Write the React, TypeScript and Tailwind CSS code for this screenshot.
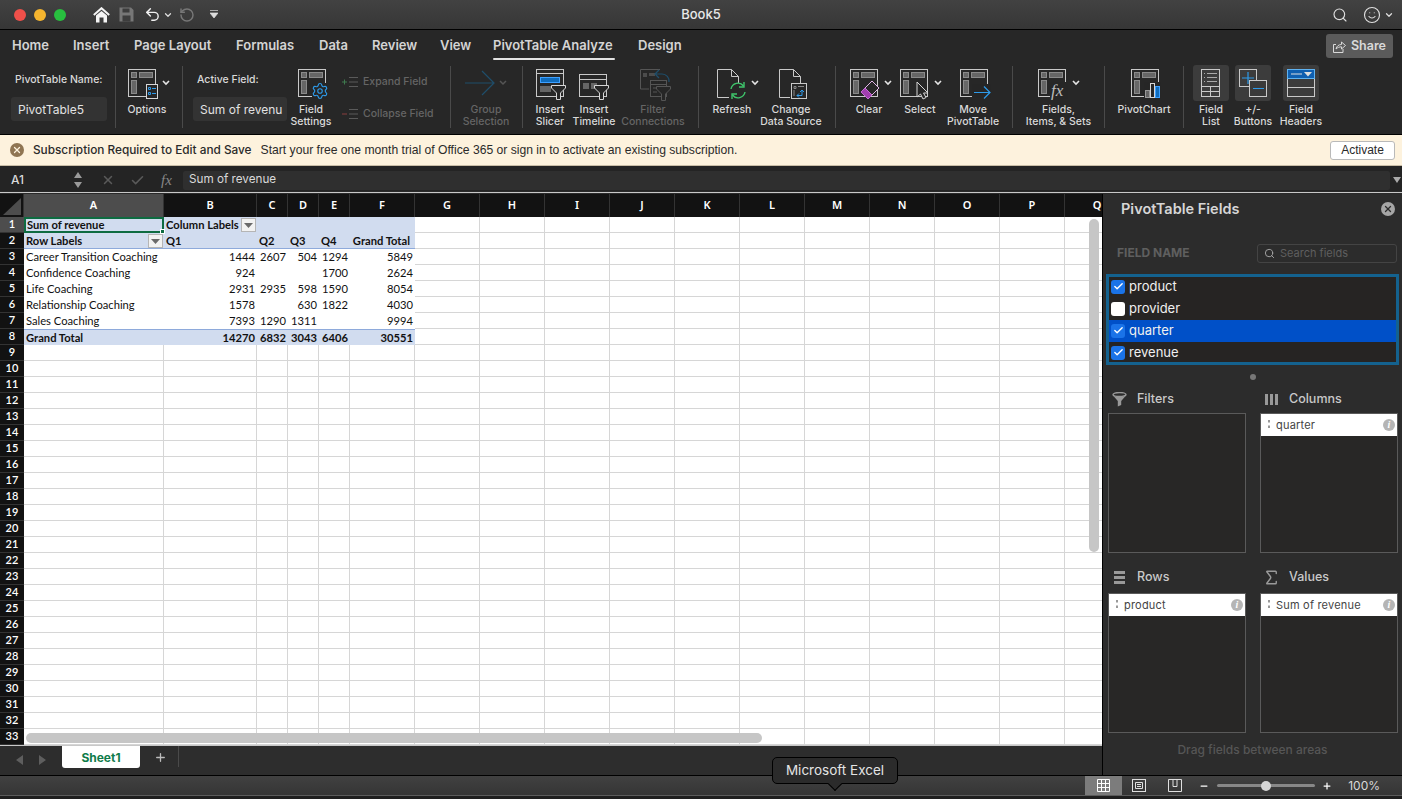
import type { ReactElement, ReactNode } from 'react'
import { ChevronDown, Search, Settings, Smile, Undo2, RotateCcw, Sigma, X, Check, Plus, Minus } from 'lucide-react'

const UI_FONT = "font-['Inter','Liberation_Sans',sans-serif]"
const SHEET_FONT = "font-['Lato','Liberation_Sans',sans-serif]"

const COLUMNS = [
  ['A', 140], ['B', 93], ['C', 31], ['D', 31], ['E', 31], ['F', 65], ['G', 65], ['H', 65], ['I', 65],
  ['J', 65], ['K', 65], ['L', 65], ['M', 65], ['N', 65], ['O', 65], ['P', 65], ['Q', 65]
] as const

const PIVOT_ROWS: (string | null)[][] = [
  ['Career Transition Coaching', '1444', '2607', '504', '1294', '5849'],
  ['Confidence Coaching', '924', null, null, '1700', '2624'],
  ['Life Coaching', '2931', '2935', '598', '1590', '8054'],
  ['Relationship Coaching', '1578', null, '630', '1822', '4030'],
  ['Sales Coaching', '7393', '1290', '1311', null, '9994']
]

const GRAND_TOTAL = ['Grand Total', '14270', '6832', '3043', '6406', '30551']

function PivotBase(): ReactElement {
  return (
    <>
      <rect x="0.5" y="0.5" width="27" height="27" stroke="#c9c9c9" fill="none" />
      <rect x="3.5" y="3.5" width="5" height="5" fill="#666" stroke="#8a8a8a" />
      <rect x="11.5" y="3.5" width="13" height="5" fill="#666" stroke="#8a8a8a" />
      <rect x="3.5" y="11.5" width="5" height="13" fill="#666" stroke="#8a8a8a" />
    </>
  )
}

function Funnel({ x, y, color = '#d6d6d6' }: { x: number; y: number; color?: string }): ReactElement {
  return (
    <path
      transform={`translate(${x} ${y})`}
      d="M0.5 0.5H14.5V3L9.5 8V14.5H5.5V8L0.5 3Z"
      fill="#262626"
      stroke={color}
    />
  )
}

function Caret({ x, y = 12 }: { x: number; y?: number }): ReactElement {
  return <path d={`M${x} ${y}l3 3l3 -3`} fill="none" stroke="#e4e4e4" strokeWidth="1.6" />
}

function Icon({ children, className = '' }: { children: ReactNode; className?: string }): ReactElement {
  return (
    <svg width="30" height="30" viewBox="0 0 30 30" className={`shrink-0 overflow-visible ${className}`}>
      {children}
    </svg>
  )
}

function OptionsIcon(): ReactElement {
  return (
    <Icon className="mr-[9px]">
      <PivotBase />
      <rect x="18.5" y="15.5" width="11" height="14" fill="#262626" stroke="#d6d6d6" />
      <path d="M20.5 18.5h2v2h-2zM20.5 23.5h2v2h-2z" fill="none" stroke="#2e9bea" />
      <path d="M24 19.5h4M24 24.5h4" stroke="#2e9bea" />
      <Caret x={35} />
    </Icon>
  )
}

function FieldSettingsIcon(): ReactElement {
  return (
    <Icon className="ml-[4px]">
      <PivotBase />
      <rect x="14" y="14" width="16" height="16" fill="#262626" />
      <Settings x={13} y={13} width={18} height={18} color="#2e9bea" strokeWidth={1.5} />
    </Icon>
  )
}

function GroupIcon(): ReactElement {
  return (
    <Icon className="mr-[12px]">
      <path d="M0 14H28M17 2L29 14L17 26" fill="none" stroke="#1f4e6b" strokeWidth="1.2" />
      <path d="M35 12l3 3l3 -3" fill="none" stroke="#555" strokeWidth="1.5" />
    </Icon>
  )
}

function SlicerIcon(): ReactElement {
  return (
    <Icon className="ml-[2px]">
      <rect x="0.5" y="0.5" width="27" height="27" stroke="#c9c9c9" fill="none" />
      <path d="M1 4.5H27" stroke="#c9c9c9" />
      <rect x="4.5" y="8.5" width="19" height="5" fill="#0f6cbd" stroke="#3ea0ff" />
      <rect x="4" y="17" width="11" height="6" fill="#666" />
      <Funnel x={15} y={16} />
    </Icon>
  )
}

function TimelineIcon(): ReactElement {
  return (
    <Icon>
      <rect x="0.5" y="5.5" width="27" height="22" stroke="#c9c9c9" fill="none" />
      <path d="M1 10.5H27" stroke="#c9c9c9" />
      <rect x="4" y="14" width="6" height="6" fill="#666" />
      <rect x="12" y="14" width="6" height="6" fill="#666" />
      <Funnel x={15} y={16} />
    </Icon>
  )
}

function ConnectionsIcon(): ReactElement {
  return (
    <Icon className="ml-[4px]">
      <path d="M20 0.5H0.5V20H9" fill="none" stroke="#555" />
      <rect x="3" y="4" width="4" height="4" fill="#4c4c4c" />
      <rect x="9" y="4" width="6" height="3" fill="#4c4c4c" />
      <path d="M29 13a7 7 0 0 0 -7 -8h-6M19 1l-4 4l4 4" fill="none" stroke="#1f4e6b" strokeWidth="1.2" />
      <rect x="10.5" y="11.5" width="16" height="16" fill="#262626" stroke="#555" />
      <path d="M11 15.5H26M13 19h6M13 23h4" stroke="#555" />
      <Funnel x={16} y={17} color="#555" />
    </Icon>
  )
}

function RefreshIcon(): ReactElement {
  return (
    <Icon>
      <path d="M0.5 0.5H14.5L21.5 7.5V14M12 28.5H0.5V0.5M14.5 0.5V7.5H21.5" fill="none" stroke="#c9c9c9" />
      <path d="M14 20a7 7 0 0 1 12.5 -3M28 23a7 7 0 0 1 -12.5 3" fill="none" stroke="#3fc66c" strokeWidth="1.4" />
      <path d="M27 13v5h-5M15 30v-5h5" fill="none" stroke="#3fc66c" strokeWidth="1.4" />
      <Caret x={35} />
    </Icon>
  )
}

function DataSourceIcon(): ReactElement {
  return (
    <Icon className="ml-[5px]">
      <path d="M0.5 0.5H14.5L21.5 7.5V14M11 28.5H0.5V0.5M14.5 0.5V7.5H21.5" fill="none" stroke="#c9c9c9" />
      <rect x="12.5" y="14.5" width="15" height="15" fill="#262626" stroke="#c9c9c9" />
      <path d="M15 17.5h2v2h-2zM19 17.5h6M15 21v6" stroke="#888" fill="none" />
      <path d="M18 26.5h5v-5M21 23l2 -2l2 2M20 24.5l-2 2l2 2" fill="none" stroke="#2e9bea" />
    </Icon>
  )
}

function ClearIcon(): ReactElement {
  return (
    <Icon className="mr-[8px]">
      <PivotBase />
      <path d="M11 23L22 12L29 19L18 30Z" fill="#262626" stroke="#e0b4e6" />
      <path d="M11 23L15 19L22 26L18 30Z" fill="#a23fb0" stroke="#c46fd2" />
      <Caret x={35} />
    </Icon>
  )
}

function SelectIcon(): ReactElement {
  return (
    <Icon className="mr-[10px]">
      <PivotBase />
      <path d="M17 13V28L20.5 25L23 30L26 28.5L23.5 24H28Z" fill="#262626" stroke="#d6d6d6" />
      <Caret x={35} />
    </Icon>
  )
}

function MoveIcon(): ReactElement {
  return (
    <Icon className="ml-[4px]">
      <PivotBase />
      <rect x="12" y="15" width="19" height="14" fill="#262626" />
      <path d="M14 23.5H30M24 17.5L30 23.5L24 29.5" fill="none" stroke="#2e9bea" strokeWidth="1.2" />
    </Icon>
  )
}

function FieldsIcon(): ReactElement {
  return (
    <Icon className="mr-[12px]">
      <PivotBase />
      <rect x="12" y="13" width="18" height="17" fill="#262626" />
      <text x="13" y="27" fontSize="17" fontStyle="italic" fontFamily="'Liberation Serif', serif" fill="#bdbdbd">
        fx
      </text>
      <Caret x={35} />
    </Icon>
  )
}

function ChartIcon(): ReactElement {
  return (
    <Icon className="ml-[4px]">
      <PivotBase />
      <rect x="13" y="13" width="17" height="17" fill="#262626" />
      <rect x="14.5" y="21.5" width="4" height="7" fill="#666" stroke="#999" />
      <rect x="19.5" y="14.5" width="4" height="14" fill="none" stroke="#d6d6d6" />
      <rect x="24.5" y="17.5" width="4" height="11" fill="#0f6cbd" stroke="#3ea0ff" />
    </Icon>
  )
}

function FieldListIcon(): ReactElement {
  return (
    <svg width="20" height="28" viewBox="0 0 20 28">
      <rect x="0.5" y="0.5" width="18" height="27" fill="none" stroke="#c9c9c9" />
      <path d="M3 4.5h1M6 4.5h10M3 8.5h1M6 8.5h10M3 12.5h1M6 12.5h10" stroke="#aaa" />
      <path d="M1 17.5H18M1 22.5H18M9.5 17.5V27" stroke="#c9c9c9" />
    </svg>
  )
}

function PlusMinusIcon(): ReactElement {
  return (
    <svg width="28" height="28" viewBox="0 0 28 28">
      <rect x="0.5" y="0.5" width="17" height="17" fill="none" stroke="#c9c9c9" />
      <rect x="10.5" y="11.5" width="17" height="16" fill="#3a3a3a" stroke="#c9c9c9" />
      <path d="M3 9H15M9 3V15M14 19.5H25" stroke="#2e9bea" strokeWidth="1.2" />
    </svg>
  )
}

function HeadersIcon(): ReactElement {
  return (
    <svg width="28" height="28" viewBox="0 0 28 28">
      <rect x="0.5" y="0.5" width="27" height="27" fill="none" stroke="#c9c9c9" />
      <rect x="0.5" y="0.5" width="27" height="9" fill="#0f5fb0" stroke="#5fb2f0" />
      <path d="M4 5H15" stroke="#ddd" />
      <path d="M17 3H25L21 7.5Z" fill="#ddd" />
      <path d="M1 18.5H27" stroke="#c9c9c9" />
    </svg>
  )
}

type RibbonButtonProps = {
  icon: ReactNode
  label: ReactNode
  width: string
  disabled?: boolean
  active?: boolean
}

function RibbonButton({ icon, label, width, disabled = false, active = false }: RibbonButtonProps): ReactElement {
  return (
    <div className={`flex shrink-0 flex-col items-center ${width}`}>
      <div className="flex h-[35px] w-full items-start justify-center">
        {active ? (
          <div className="-mt-[4px] flex h-[36px] w-[36px] items-center justify-center rounded-[3px] bg-[#3c3c3c]">{icon}</div>
        ) : (
          icon
        )}
      </div>
      <div className={`whitespace-nowrap text-center text-[10.5px] leading-[12px] font-medium ${disabled ? 'text-[#656565]' : 'text-[#d9d9d9]'}`}>
        {label}
      </div>
    </div>
  )
}

function Separator(): ReactElement {
  return <div className="mt-[2px] h-[62px] w-px shrink-0 bg-[#4a4a4a]" />
}

function TitleBar(): ReactElement {
  return (
    <div className="grid h-[29px] shrink-0 grid-cols-[1fr_auto_1fr] items-center bg-gradient-to-b from-[#424242] to-[#363636] text-[#e8e8e8]">
      <div className="flex items-center">
        <span className="ml-[14px] h-3 w-3 rounded-full bg-[#f0504a]" />
        <span className="ml-2 h-3 w-3 rounded-full bg-[#f5b52f]" />
        <span className="ml-2 h-3 w-3 rounded-full bg-[#28c03f]" />
        <svg width="17" height="16" viewBox="0 0 17 16" className="ml-[27px]">
          <path d="M0.8 8L8.5 1.2L16.2 8" fill="none" stroke="#f4f4f4" strokeWidth="2" />
          <path d="M3 8.5L8.5 4L14 8.5V15.5H10.5V10.5H6.5V15.5H3Z" fill="#f4f4f4" />
        </svg>
        <svg width="15" height="15" viewBox="0 0 15 15" className="ml-[9px]">
          <path d="M0.5 0.5H12L14.5 3V14.5H0.5Z" fill="#777" />
          <rect x="3.5" y="1.5" width="7" height="4" fill="#3d3d3d" />
          <rect x="3.5" y="8.5" width="8" height="6" fill="#3d3d3d" />
        </svg>
        <Undo2 className="ml-[10px] h-[17px] w-[17px] text-[#f0f0f0]" strokeWidth={2} />
        <ChevronDown className="ml-[2px] h-[10px] w-[10px] text-[#ddd]" strokeWidth={3} />
        <RotateCcw className="ml-[6px] h-[16px] w-[16px] text-[#777]" strokeWidth={2.2} />
        <svg width="8" height="9" viewBox="0 0 8 9" className="ml-[15px]">
          <path d="M0 0.5H8M0 3H8L4 8Z" fill="#ddd" stroke="#ddd" strokeWidth="0.7" />
        </svg>
      </div>
      <div className={`text-[13px] font-medium text-[#e8e8e8] ${UI_FONT}`}>Book5</div>
      <div className="flex items-center justify-end pr-[8px]">
        <Search className="h-[16px] w-[16px] text-[#e0e0e0]" strokeWidth={1.7} />
        <Smile className="ml-[15px] h-[18px] w-[18px] text-[#e0e0e0]" strokeWidth={1.5} />
        <ChevronDown className="ml-[3px] h-[10px] w-[10px] text-[#ddd]" strokeWidth={3} />
      </div>
    </div>
  )
}

function TabRow(): ReactElement {
  return (
    <div className={`flex h-[33px] shrink-0 items-center border-t border-black bg-[#272727] pl-[12px] text-[13px] font-semibold text-[#d4d4d4] ${UI_FONT}`}>
      <span className="w-[61px]">Home</span>
      <span className="w-[61px]">Insert</span>
      <span className="w-[102px]">Page Layout</span>
      <span className="w-[83px]">Formulas</span>
      <span className="w-[53px]">Data</span>
      <span className="w-[68px]">Review</span>
      <span className="w-[53px]">View</span>
      <span className="relative w-[145px]">
        PivotTable Analyze
        <span className="absolute left-0 top-[22px] h-[2px] w-[122px] rounded-full bg-[#e2e2e2]" />
      </span>
      <span>Design</span>
      <span className="ml-auto mr-[9px] flex h-[24px] w-[67px] items-center justify-center gap-[5px] rounded-[3px] bg-[#5b5b5b] text-[12.5px] text-[#d9d9d9]">
        <svg width="13" height="13" viewBox="0 0 13 13">
          <path d="M3 4.5H0.5V12.5H10V9" fill="none" stroke="#d9d9d9" />
          <path d="M3 9C3.5 6 6 4.5 8.5 4.5V2L12.5 5.5L8.5 9V6.8C6.5 6.8 4.5 7.5 3 9Z" fill="none" stroke="#d9d9d9" />
        </svg>
        Share
      </span>
    </div>
  )
}

function Ribbon(): ReactElement {
  return (
    <div className={`flex h-[72px] shrink-0 items-start bg-[#272727] pt-[2px] ${UI_FONT}`}>
      <div className="w-[115px] shrink-0 pl-[11px] pt-[9px]">
        <div className="pl-[4px] text-[10.5px] leading-[14px] font-medium text-[#d9d9d9]">PivotTable Name:</div>
        <div className="mt-[10px] flex h-[24px] w-[96px] items-center rounded-[3px] bg-[#333] pl-[7px] pt-[1px] text-[12px] text-[#e2e2e2]">PivotTable5</div>
      </div>
      <Separator />
      <div className="w-[66px] shrink-0 pt-[5px]">
        <RibbonButton width="w-[62px]" icon={<OptionsIcon />} label="Options" />
      </div>
      <Separator />
      <div className="flex w-[267px] shrink-0">
        <div className="w-[104px] shrink-0 pl-[10px] pt-[9px]">
          <div className="pl-[4px] text-[10.5px] leading-[14px] font-medium text-[#d9d9d9]">Active Field:</div>
          <div className="mt-[10px] flex h-[24px] w-[94px] items-center overflow-hidden rounded-[3px] bg-[#333] pl-[7px] pt-[1px] text-[12px] whitespace-nowrap text-[#e2e2e2]">Sum of revenu</div>
        </div>
        <div className="w-[48px] shrink-0 pt-[5px]">
          <RibbonButton width="w-[48px]" icon={<FieldSettingsIcon />} label={<>Field<br />Settings</>} />
        </div>
        <div className="pl-[7px] pt-[9px] text-[10.5px] font-medium text-[#656565]">
          <div className="flex h-[18px] items-center gap-[5px]">
            <svg width="16" height="12" viewBox="0 0 16 12">
              <path d="M0 6H5M2.5 3.5V8.5" stroke="#3f7a4f" />
              <path d="M7 1.5H16M7 6H16M7 10.5H16" stroke="#5a5a5a" />
            </svg>
            Expand Field
          </div>
          <div className="mt-[14px] flex h-[18px] items-center gap-[5px]">
            <svg width="16" height="12" viewBox="0 0 16 12">
              <path d="M0 6H5" stroke="#8a3f3f" />
              <path d="M7 1.5H16M7 6H16M7 10.5H16" stroke="#5a5a5a" />
            </svg>
            Collapse Field
          </div>
        </div>
      </div>
      <Separator />
      <div className="w-[71px] shrink-0 pl-[5px] pt-[5px]">
        <RibbonButton disabled width="w-[60px]" icon={<GroupIcon />} label={<>Group<br />Selection</>} />
      </div>
      <Separator />
      <div className="flex w-[175px] shrink-0 pl-[5px] pt-[5px]">
        <RibbonButton width="w-[44px]" icon={<SlicerIcon />} label={<>Insert<br />Slicer</>} />
        <RibbonButton width="w-[44px]" icon={<TimelineIcon />} label={<>Insert<br />Timeline</>} />
        <RibbonButton disabled width="w-[74px]" icon={<ConnectionsIcon />} label={<>Filter<br />Connections</>} />
      </div>
      <Separator />
      <div className="flex w-[136px] shrink-0 pl-[4px] pt-[5px]">
        <RibbonButton width="w-[58px]" icon={<RefreshIcon />} label="Refresh" />
        <RibbonButton width="w-[60px]" icon={<DataSourceIcon />} label={<>Change<br />Data Source</>} />
      </div>
      <Separator />
      <div className="flex w-[176px] shrink-0 pt-[5px]">
        <RibbonButton width="w-[66px]" icon={<ClearIcon />} label="Clear" />
        <RibbonButton width="w-[36px]" icon={<SelectIcon />} label="Select" />
        <RibbonButton width="w-[70px]" icon={<MoveIcon />} label={<>Move<br />PivotTable</>} />
      </div>
      <Separator />
      <div className="w-[91px] shrink-0 pt-[5px]">
        <RibbonButton width="w-[91px]" icon={<FieldsIcon />} label={<>Fields,<br />Items, &amp; Sets</>} />
      </div>
      <Separator />
      <div className="w-[78px] shrink-0 pt-[5px]">
        <RibbonButton width="w-[78px]" icon={<ChartIcon />} label="PivotChart" />
      </div>
      <Separator />
      <div className="flex shrink-0 pl-[7px] pt-[5px]">
        <RibbonButton active width="w-[40px]" icon={<FieldListIcon />} label={<>Field<br />List</>} />
        <RibbonButton active width="w-[44px]" icon={<PlusMinusIcon />} label={<>+/-<br />Buttons</>} />
        <RibbonButton active width="w-[52px]" icon={<HeadersIcon />} label={<>Field<br />Headers</>} />
      </div>
    </div>
  )
}

function Banner(): ReactElement {
  return (
    <div className="flex h-[32px] shrink-0 items-center border-t border-black border-b border-b-[#c9bda6] bg-[#fdf2dd] text-[12.15px] text-[#2a2a2a] font-['Liberation_Sans',sans-serif]">
      <span className="ml-[10px] flex h-[14px] w-[14px] items-center justify-center rounded-full bg-[#8f7552]">
        <X className="h-[10px] w-[10px] text-[#fdf2dd]" strokeWidth={3} />
      </span>
      <span className={`ml-[9px] pt-[1px] text-[11.8px] font-medium ${UI_FONT}`}>Subscription Required to Edit and Save</span>
      <span className="ml-[9px] pt-[1px]">Start your free one month trial of Office 365 or sign in to activate an existing subscription.</span>
      <span className="ml-auto mr-[7px] flex h-[19px] w-[65px] items-center justify-center rounded-[3px] border border-[#b9b9b9] bg-white text-[12px]">Activate</span>
    </div>
  )
}

function FormulaBar(): ReactElement {
  return (
    <div className={`flex h-[25px] shrink-0 items-center bg-[#242424] pt-[3px] text-[11.7px] text-[#d9d9d9] ${UI_FONT}`}>
      <span className="w-[73px] pl-[11px] text-[12px] font-medium">A1</span>
      <svg width="10" height="18" viewBox="0 0 10 18">
        <path d="M5 1L9 7H1ZM5 17L1 11H9Z" fill="#9a9a9a" />
      </svg>
      <X className="ml-[18px] h-[14px] w-[14px] text-[#5a5a5a]" strokeWidth={2.5} />
      <Check className="ml-[15px] h-[15px] w-[15px] text-[#5a5a5a]" strokeWidth={2.5} />
      <span className="ml-[16px] w-[22px] font-['Liberation_Serif',serif] text-[15px] italic text-[#888]">fx</span>
      <div className="flex h-[19px] w-[1207px] items-center rounded-[2px] bg-[#2f2f2f] pl-[6px]">Sum of revenue</div>
      <svg width="8" height="6" viewBox="0 0 8 6" className="ml-[3px]">
        <path d="M0 0H8L4 6Z" fill="#aaa" />
      </svg>
    </div>
  )
}

function HeaderRow(): ReactElement {
  return (
    <div className="flex h-[23px] shrink-0 bg-[#121212] text-[11px] font-semibold text-white">
      <div className="flex h-full w-[24px] shrink-0 items-end justify-end border-r border-[#333] bg-[#121212] p-[2px]">
        <svg width="18" height="17" viewBox="0 0 18 17">
          <path d="M18 0V17H0Z" fill="#4d4d4d" />
        </svg>
      </div>
      {COLUMNS.map(([name, width], index) => (
        <div
          key={name}
          style={{ width }}
          className={`flex shrink-0 items-center justify-center border-r border-[#333] ${index === 0 ? 'bg-[#4d4d4d]' : ''}`}
        >
          {name}
        </div>
      ))}
    </div>
  )
}

function FilterButton(): ReactElement {
  return (
    <span className="flex h-[14px] w-[15px] shrink-0 items-center justify-center border border-[#b5b5b5] bg-[#f2f2f2]">
      <svg width="9" height="5" viewBox="0 0 9 5">
        <path d="M0 0H9L4.5 5Z" fill="#6a6a6a" />
      </svg>
    </span>
  )
}

function RowHeader({ n }: { n: number }): ReactElement {
  return (
    <div className={`flex h-full w-[24px] shrink-0 items-center justify-center border-b border-[#333] text-[11px] font-semibold text-white ${n === 1 ? 'bg-[#4d4d4d]' : 'bg-[#121212]'}`}>
      {n}
    </div>
  )
}

function EmptyCells({ from }: { from: number }): ReactElement {
  return (
    <>
      {COLUMNS.slice(from).map(([name, width]) => (
        <div key={name} style={{ width }} className="h-full shrink-0 border-r border-b border-[#d6d6d6]" />
      ))}
    </>
  )
}

function DataRow({ n, cells, kind }: { n: number; cells: (string | null)[]; kind: 'body' | 'total' }): ReactElement {
  const total = kind === 'total'
  return (
    <div className="flex h-[16px] shrink-0">
      <RowHeader n={n} />
      {cells.map((value, index) => (
        <div
          key={COLUMNS[index][0]}
          style={{ width: COLUMNS[index][1] }}
          className={`h-full shrink-0 overflow-visible whitespace-nowrap leading-[15px] ${index === 0 ? 'pl-[2px] text-left' : 'pr-[2px] text-right'} ${total ? 'border-t border-t-[#8eaadb] bg-[#d1dcef] font-bold' : ''}`}
        >
          {value}
        </div>
      ))}
      <EmptyCells from={6} />
    </div>
  )
}

function Sheet(): ReactElement {
  const rowsBelow = Array.from({ length: 25 }, (_, index) => index + 9)
  return (
    <div className={`relative h-[528px] shrink-0 overflow-hidden bg-white text-[11.2px] text-[#111] ${SHEET_FONT}`}>
      <div className="flex h-[16px]">
        <RowHeader n={1} />
        <div className="relative h-full w-[140px] shrink-0 border-2 border-[#0e6b41] bg-[#d1dcef] pl-[1px] leading-[12px] font-bold">
          Sum of revenue
          <span className="absolute -bottom-[3px] -right-[3px] h-[5px] w-[5px] border border-white bg-[#0e6b41]" />
        </div>
        <div className="flex h-full w-[93px] shrink-0 items-center justify-between bg-[#d1dcef] pl-[2px] pr-[1px] font-bold">
          Column Labels
          <FilterButton />
        </div>
        <div className="h-full w-[158px] shrink-0 bg-[#d1dcef]" />
        <EmptyCells from={6} />
      </div>
      <div className="flex h-[16px]">
        <RowHeader n={2} />
        <div className="flex h-full w-[140px] shrink-0 items-center justify-between border-b border-[#8eaadb] bg-[#d1dcef] pl-[2px] pr-[1px] pt-[1px] font-bold">
          Row Labels
          <FilterButton />
        </div>
        <div className="flex h-full w-[251px] shrink-0 items-center border-b border-[#8eaadb] bg-[#d1dcef] pt-[1px] font-bold">
          <span className="w-[93px] pl-[2px]">Q1</span>
          <span className="w-[31px] pl-[2px]">Q2</span>
          <span className="w-[31px] pl-[2px]">Q3</span>
          <span className="w-[31px] pl-[2px]">Q4</span>
          <span className="w-[65px] pr-[5px] text-right">Grand Total</span>
        </div>
        <EmptyCells from={6} />
      </div>
      {PIVOT_ROWS.map((cells, index) => (
        <DataRow key={index} n={index + 3} cells={cells} kind="body" />
      ))}
      <DataRow n={8} cells={GRAND_TOTAL} kind="total" />
      {rowsBelow.map((n) => (
        <div key={n} className="flex h-[16px]">
          <RowHeader n={n} />
          <EmptyCells from={0} />
        </div>
      ))}
      {/* overlay scrollbars */}
      <div className="absolute right-[3px] top-[2px] h-[333px] w-[10px] rounded-full bg-[#c6c6c6]" />
      <div className="absolute bottom-[2px] left-[26px] h-[10px] w-[736px] rounded-full bg-[#c6c6c6]" />
    </div>
  )
}

function SheetTabs(): ReactElement {
  return (
    <div className={`flex h-[30px] shrink-0 items-start border-t border-[#c8c8c8] bg-[#2d2d2d] ${UI_FONT}`}>
      <svg width="50" height="28" viewBox="0 0 50 28" className="ml-[12px] shrink-0">
        <path d="M11 9V19L4 14ZM27 9V19L34 14Z" fill="#5e5e5e" />
      </svg>
      <div className="flex h-[22px] w-[78px] shrink-0 items-center justify-center rounded-b-[3px] bg-white pt-[1px] text-[12px] font-bold text-[#0f7c4a]">Sheet1</div>
      <Plus className="ml-[14px] mt-[5px] h-[13px] w-[13px] text-[#bcbcbc]" strokeWidth={2.4} />
      <div className="ml-[11px] h-[21px] w-px bg-[#4a4a4a]" />
    </div>
  )
}

function InfoDot(): ReactElement {
  return (
    <span className="flex h-[12px] w-[12px] items-center justify-center rounded-full bg-[#b5b5b5] font-['Liberation_Serif',serif] text-[10px] font-bold italic text-white">
      i
    </span>
  )
}

function FieldRow({ name, checked, selected = false }: { name: string; checked: boolean; selected?: boolean }): ReactElement {
  return (
    <div className={`flex h-[22px] items-center pl-[2px] text-[13px] text-[#f0f0f0] ${selected ? 'bg-[#0050c8]' : ''}`}>
      <span className={`flex h-[14px] w-[14px] items-center justify-center rounded-[3px] ${checked ? 'bg-[#1a73e8]' : 'bg-white'}`}>
        {checked ? <Check className="h-[11px] w-[11px] text-white" strokeWidth={3} /> : null}
      </span>
      <span className="ml-[4px]">{name}</span>
    </div>
  )
}

function AreaItem({ name }: { name: string }): ReactElement {
  return (
    <div className="flex h-[22px] items-center bg-white pl-[6px] pr-[2px] text-[11px] text-[#444]">
      <svg width="4" height="9" viewBox="0 0 4 9">
        <path d="M1 0h2v2.5h-2zM1 5.5h2v2.5h-2z" fill="#999" />
      </svg>
      <span className="ml-[5px] flex-1 tracking-[0.2px]">{name}</span>
      <InfoDot />
    </div>
  )
}

type AreaProps = {
  icon: ReactNode
  title: string
  item?: string
  gap: string
}

function Area({ icon, title, item, gap }: AreaProps): ReactElement {
  return (
    <div>
      <div className="flex h-[20px] items-center gap-[10px] pl-[3px] text-[12.5px] font-medium text-[#c9c9c9]">
        <span className="flex w-[16px] justify-center">{icon}</span>
        {title}
      </div>
      <div className={`h-[140px] w-[138px] border border-[#5a5a5a] bg-[#282726] ${gap}`}>
        {item ? <AreaItem name={item} /> : null}
      </div>
    </div>
  )
}

function FieldsPanel(): ReactElement {
  return (
    <div className={`flex w-[299px] shrink-0 flex-col bg-[#2c2c2c] ${UI_FONT}`}>
      <div className="flex items-center justify-between pl-[18px] pr-[7px] pt-[4px]">
        <span className="text-[14.5px] font-semibold text-[#d6d6d6]">PivotTable Fields</span>
        <span className="flex h-[14px] w-[14px] items-center justify-center rounded-full bg-[#a6a6a6]">
          <X className="h-[10px] w-[10px] text-[#2c2c2c]" strokeWidth={3} />
        </span>
      </div>
      <div className="mt-[24px] flex items-center justify-between pl-[14px] pr-[5px]">
        <span className="text-[12px] font-bold text-[#5f5f5f]">FIELD NAME</span>
        <div className="flex h-[19px] w-[140px] items-center rounded-[3px] border border-[#444] pl-[6px] text-[11px] text-[#5f5f5f]">
          <Search className="mr-[5px] h-[11px] w-[11px] text-[#aaa]" strokeWidth={2} />
          Search fields
        </div>
      </div>
      <div className="ml-[3px] mt-[11px] h-[91px] w-[293px] overflow-hidden border-[3px] border-[#14628f] bg-[#262423]">
        <div className="-mt-[1px]">
          <FieldRow name="product" checked />
          <FieldRow name="provider" checked={false} />
          <FieldRow name="quarter" checked selected />
          <FieldRow name="revenue" checked />
        </div>
      </div>
      <div className="mt-[9px] flex justify-center">
        <span className="h-[6px] w-[6px] rounded-full bg-[#777]" />
      </div>
      <div className="mt-[10px] flex justify-between pl-[5px] pr-[4px]">
        <Area
          title="Filters"
          gap="mt-[3px]"
          icon={
            <svg width="15" height="15" viewBox="0 0 15 15">
              <ellipse cx="7.5" cy="2.5" rx="6.5" ry="2" fill="none" stroke="#999" strokeWidth="1.4" />
              <path d="M1 3.5L5.8 9V14.5L9.2 13V9L14 3.5C12 5.4 3 5.4 1 3.5Z" fill="#999" />
            </svg>
          }
        />
        <Area
          title="Columns"
          item="quarter"
          gap="mt-[3px]"
          icon={
            <svg width="13" height="11" viewBox="0 0 13 11">
              <path d="M0 0h3v11h-3zM5 0h3v11h-3zM10 0h3v11h-3z" fill="#999" />
            </svg>
          }
        />
      </div>
      <div className="mt-[15px] flex justify-between pl-[5px] pr-[4px]">
        <Area
          title="Rows"
          item="product"
          gap="mt-[5px]"
          icon={
            <svg width="11" height="13" viewBox="0 0 11 13">
              <path d="M0 0h11v3h-11zM0 5h11v3h-11zM0 10h11v3h-11z" fill="#999" />
            </svg>
          }
        />
        <Area
          title="Values"
          item="Sum of revenue"
          gap="mt-[5px]"
          icon={<Sigma className="h-[19px] w-[19px] shrink-0 text-[#999]" strokeWidth={1.8} />}
        />
      </div>
      <div className="mt-[8px] text-center text-[12px] font-medium text-[#565656]">Drag fields between areas</div>
    </div>
  )
}

function StatusBar(): ReactElement {
  return (
    <div className={`flex h-[21px] shrink-0 items-stretch border-t border-b border-t-black border-b-[#5c5c5c] bg-gradient-to-b from-[#414141] to-[#353535] ${UI_FONT}`}>
      <div className="flex-1" />
      <div className="flex w-[37px] items-center justify-center bg-[#7c7c7c]">
        <svg width="13" height="13" viewBox="0 0 13 13">
          <path d="M0.5 0.5H12.5V12.5H0.5ZM4.5 0.5V12.5M8.5 0.5V12.5M0.5 4.5H12.5M0.5 8.5H12.5" fill="none" stroke="#fff" />
        </svg>
      </div>
      <div className="ml-[10px] flex items-center">
        <svg width="14" height="13" viewBox="0 0 14 13">
          <rect x="0.5" y="0.5" width="13" height="12" fill="none" stroke="#e0e0e0" />
          <path d="M3.5 3.5H10.5V9.5H3.5ZM5 5.5H9M5 7.5H9" fill="none" stroke="#e0e0e0" />
        </svg>
      </div>
      <div className="ml-[22px] flex items-center">
        <svg width="14" height="13" viewBox="0 0 14 13">
          <path d="M0.5 0.5H13.5V12.5H0.5ZM5 0.5V7.5H9V0.5" fill="none" stroke="#e0e0e0" />
        </svg>
      </div>
      <div className="ml-[17px] flex items-center">
        <Minus className="h-[10px] w-[10px] text-white" strokeWidth={3} />
      </div>
      <div className="relative ml-[8px] flex w-[98px] items-center">
        <div className="h-[3px] w-full rounded-full bg-[#888]" />
        <span className="absolute left-[44px] h-[10px] w-[10px] rounded-full bg-[#d6d6d6]" />
      </div>
      <div className="ml-[7px] flex items-center">
        <Plus className="h-[10px] w-[10px] text-white" strokeWidth={3} />
      </div>
      <div className="ml-[16px] mr-[22px] flex items-center text-[12px] text-[#d9d9d9]">100%</div>
    </div>
  )
}

export default function App(): ReactElement {
  return (
    <div className="relative flex h-[799px] w-[1402px] flex-col overflow-hidden bg-[#1f1f1f]">
      <TitleBar />
      <TabRow />
      <Ribbon />
      <Banner />
      <FormulaBar />
      <div className="h-[3px] shrink-0 border-y border-[#2a2a2a] bg-[#c8c8c8]" />
      <div className="flex h-[581px] shrink-0">
        <div className="flex w-[1103px] shrink-0 flex-col border-r border-black">
          <HeaderRow />
          <Sheet />
          <SheetTabs />
        </div>
        <FieldsPanel />
      </div>
      <StatusBar />
      {/* dock tooltip */}
      <div className={`absolute left-[772px] top-[757px] flex h-[27px] w-[126px] items-center justify-center rounded-[5px] border border-black bg-[#2b2b2b] text-[13.5px] text-[#e4e4e4] ${UI_FONT}`}>
        Microsoft Excel
        <span className="absolute -bottom-[6px] left-[57px] h-[10px] w-[10px] rotate-45 border-r border-b border-black bg-[#2b2b2b]" />
      </div>
    </div>
  )
}
